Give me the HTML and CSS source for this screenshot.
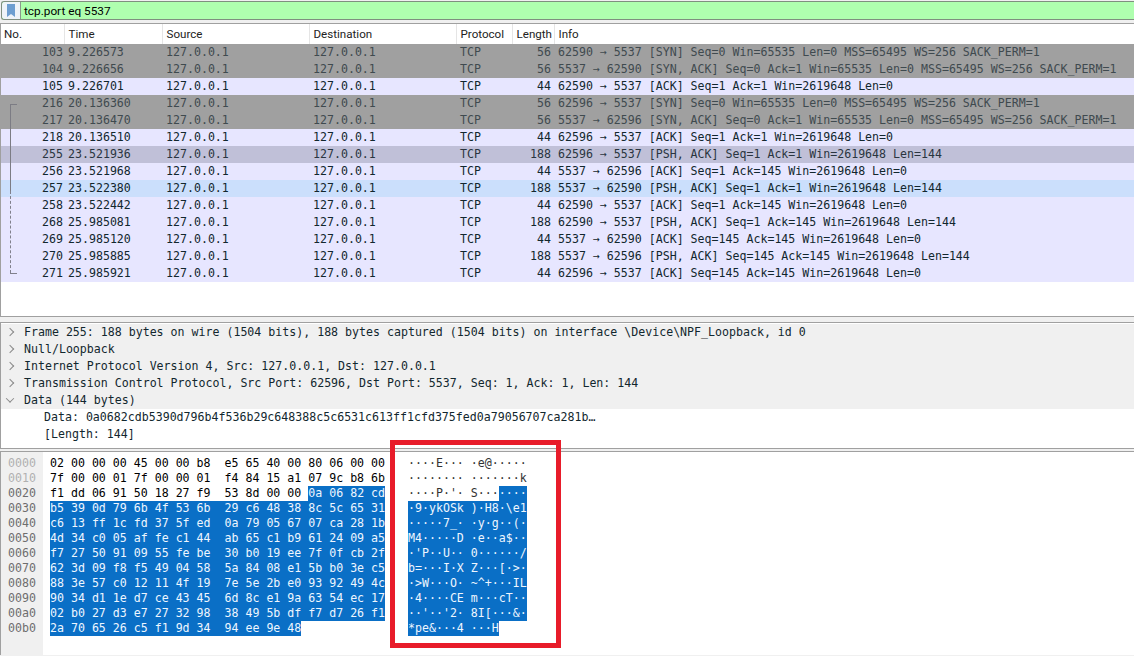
FILE: index.html
```html
<!DOCTYPE html>
<html>
<head>
    <meta charset="UTF-8">
    <title>tcp.port eq 5537</title>
    <link rel="stylesheet" href="styles.css">
</head>
<body>
    <div class="filter-wrap">
        <div class="filter-bar">
            <span class="bookmark-box">
                <svg width="10" height="14" viewBox="0 0 10 14"><path d="M1 0H9V13L5 10L1 13Z" fill="#6d9ed0"/></svg>
            </span>
            <span class="filter-text">tcp.port eq 5537</span>
        </div>
    </div>

    <div class="packet-panel">
        <table class="packets">
            <tr class="head">
                <th class="c-no">No.</th>
                <th class="c-time">Time</th>
                <th class="c-src">Source</th>
                <th class="c-dst">Destination</th>
                <th class="c-proto">Protocol</th>
                <th class="c-len">Length</th>
                <th class="c-info">Info</th>
            </tr>
            <tr class="syn"><td class="num">103</td><td>9.226573</td><td>127.0.0.1</td><td>127.0.0.1</td><td>TCP</td><td class="num">56</td><td>62590 → 5537 [SYN] Seq=0 Win=65535 Len=0 MSS=65495 WS=256 SACK_PERM=1</td></tr>
            <tr class="syn"><td class="num">104</td><td>9.226656</td><td>127.0.0.1</td><td>127.0.0.1</td><td>TCP</td><td class="num">56</td><td>5537 → 62590 [SYN, ACK] Seq=0 Ack=1 Win=65535 Len=0 MSS=65495 WS=256 SACK_PERM=1</td></tr>
            <tr class="tcp"><td class="num">105</td><td>9.226701</td><td>127.0.0.1</td><td>127.0.0.1</td><td>TCP</td><td class="num">44</td><td>62590 → 5537 [ACK] Seq=1 Ack=1 Win=2619648 Len=0</td></tr>
            <tr class="syn"><td class="num">216</td><td>20.136360</td><td>127.0.0.1</td><td>127.0.0.1</td><td>TCP</td><td class="num">56</td><td>62596 → 5537 [SYN] Seq=0 Win=65535 Len=0 MSS=65495 WS=256 SACK_PERM=1</td></tr>
            <tr class="syn"><td class="num">217</td><td>20.136470</td><td>127.0.0.1</td><td>127.0.0.1</td><td>TCP</td><td class="num">56</td><td>5537 → 62596 [SYN, ACK] Seq=0 Ack=1 Win=65535 Len=0 MSS=65495 WS=256 SACK_PERM=1</td></tr>
            <tr class="tcp"><td class="num">218</td><td>20.136510</td><td>127.0.0.1</td><td>127.0.0.1</td><td>TCP</td><td class="num">44</td><td>62596 → 5537 [ACK] Seq=1 Ack=1 Win=2619648 Len=0</td></tr>
            <tr class="current"><td class="num">255</td><td>23.521936</td><td>127.0.0.1</td><td>127.0.0.1</td><td>TCP</td><td class="num">188</td><td>62596 → 5537 [PSH, ACK] Seq=1 Ack=1 Win=2619648 Len=144</td></tr>
            <tr class="tcp"><td class="num">256</td><td>23.521968</td><td>127.0.0.1</td><td>127.0.0.1</td><td>TCP</td><td class="num">44</td><td>5537 → 62596 [ACK] Seq=1 Ack=145 Win=2619648 Len=0</td></tr>
            <tr class="related"><td class="num">257</td><td>23.522380</td><td>127.0.0.1</td><td>127.0.0.1</td><td>TCP</td><td class="num">188</td><td>5537 → 62590 [PSH, ACK] Seq=1 Ack=1 Win=2619648 Len=144</td></tr>
            <tr class="tcp"><td class="num">258</td><td>23.522442</td><td>127.0.0.1</td><td>127.0.0.1</td><td>TCP</td><td class="num">44</td><td>62590 → 5537 [ACK] Seq=1 Ack=145 Win=2619648 Len=0</td></tr>
            <tr class="tcp"><td class="num">268</td><td>25.985081</td><td>127.0.0.1</td><td>127.0.0.1</td><td>TCP</td><td class="num">188</td><td>62590 → 5537 [PSH, ACK] Seq=1 Ack=145 Win=2619648 Len=144</td></tr>
            <tr class="tcp"><td class="num">269</td><td>25.985120</td><td>127.0.0.1</td><td>127.0.0.1</td><td>TCP</td><td class="num">44</td><td>5537 → 62590 [ACK] Seq=145 Ack=145 Win=2619648 Len=0</td></tr>
            <tr class="tcp"><td class="num">270</td><td>25.985885</td><td>127.0.0.1</td><td>127.0.0.1</td><td>TCP</td><td class="num">188</td><td>5537 → 62596 [PSH, ACK] Seq=145 Ack=145 Win=2619648 Len=144</td></tr>
            <tr class="tcp"><td class="num">271</td><td>25.985921</td><td>127.0.0.1</td><td>127.0.0.1</td><td>TCP</td><td class="num">44</td><td>62596 → 5537 [ACK] Seq=145 Ack=145 Win=2619648 Len=0</td></tr>
        </table>
        <div class="conv-solid"></div>
        <div class="conv-dashed"></div>
        <div class="conv-end"></div>
    </div>

    <div class="detail-panel">
        <div class="tree-row"><span class="arrow closed"></span><span class="tree-text">Frame 255: 188 bytes on wire (1504 bits), 188 bytes captured (1504 bits) on interface \Device\NPF_Loopback, id 0</span></div>
        <div class="tree-row"><span class="arrow closed"></span><span class="tree-text">Null/Loopback</span></div>
        <div class="tree-row"><span class="arrow closed"></span><span class="tree-text">Internet Protocol Version 4, Src: 127.0.0.1, Dst: 127.0.0.1</span></div>
        <div class="tree-row"><span class="arrow closed"></span><span class="tree-text">Transmission Control Protocol, Src Port: 62596, Dst Port: 5537, Seq: 1, Ack: 1, Len: 144</span></div>
        <div class="tree-row"><span class="arrow open"></span><span class="tree-text">Data (144 bytes)</span></div>
        <div class="tree-row child"><span class="tree-text">Data: 0a0682cdb5390d796b4f536b29c648388c5c6531c613ff1cfd375fed0a79056707ca281b…</span></div>
        <div class="tree-row child"><span class="tree-text">[Length: 144]</span></div>
    </div>

    <div class="hex-panel">
        <div class="offsets">
            <div class="dim">0000</div><div class="dim">0010</div><div>0020</div><div>0030</div><div>0040</div><div>0050</div>
            <div>0060</div><div>0070</div><div>0080</div><div>0090</div><div>00a0</div><div>00b0</div>
        </div>
        <div class="hex-col">
            <div>02 00 00 00 45 00 00 b8  e5 65 40 00 80 06 00 00</div>
            <div>7f 00 00 01 7f 00 00 01  f4 84 15 a1 07 9c b8 6b</div>
            <div>f1 dd 06 91 50 18 27 f9  53 8d 00 00 <span class="sel">0a 06 82 cd</span></div>
            <div><span class="sel">b5 39 0d 79 6b 4f 53 6b  29 c6 48 38 8c 5c 65 31</span></div>
            <div><span class="sel">c6 13 ff 1c fd 37 5f ed  0a 79 05 67 07 ca 28 1b</span></div>
            <div><span class="sel">4d 34 c0 05 af fe c1 44  ab 65 c1 b9 61 24 09 a5</span></div>
            <div><span class="sel">f7 27 50 91 09 55 fe be  30 b0 19 ee 7f 0f cb 2f</span></div>
            <div><span class="sel">62 3d 09 f8 f5 49 04 58  5a 84 08 e1 5b b0 3e c5</span></div>
            <div><span class="sel">88 3e 57 c0 12 11 4f 19  7e 5e 2b e0 93 92 49 4c</span></div>
            <div><span class="sel">90 34 d1 1e d7 ce 43 45  6d 8c e1 9a 63 54 ec 17</span></div>
            <div><span class="sel">02 b0 27 d3 e7 27 32 98  38 49 5b df f7 d7 26 f1</span></div>
            <div><span class="sel">2a 70 65 26 c5 f1 9d 34  94 ee 9e 48</span></div>
        </div>
        <div class="ascii-col">
            <div>····E··· ·e@·····</div>
            <div>········ ·······k</div>
            <div>····P·'· S···<span class="sel">····</span></div>
            <div><span class="sel">·9·ykOSk )·H8·\e1</span></div>
            <div class="on-top"><span class="sel">·····7_· ·y·g··(·</span></div>
            <div><span class="sel">M4·····D ·e··a$··</span></div>
            <div><span class="sel">·'P··U·· 0······/</span></div>
            <div><span class="sel">b=···I·X Z···[·&gt;·</span></div>
            <div><span class="sel">·&gt;W···O· ~^+···IL</span></div>
            <div><span class="sel">·4····CE m···cT··</span></div>
            <div><span class="sel">··'··'2· 8I[···&amp;·</span></div>
            <div><span class="sel">*pe&amp;···4 ···H</span></div>
        </div>
    </div>

    <div class="red-box"></div>
</body>
</html>
```

FILE: styles.css
```css
html, body {
    margin: 0;
    height: 656px;
    overflow: hidden;
}
body {
    position: relative;
    background: #f0f0f0;
    font-family: "DejaVu Sans Mono", monospace;
    font-size: 11.6px;
    color: #12272e;
}

/* filter bar */
.filter-wrap {
    height: 23px;
    padding: 1px 0 0 1px;
    box-sizing: border-box;
}
.filter-bar {
    display: flex;
    align-items: center;
    height: 19px;
    box-sizing: border-box;
    background: #afffaf;
    border: 1px solid #7f8f7f;
    border-right: none;
    border-radius: 3px 0 0 3px;
}
.bookmark-box {
    display: flex;
    justify-content: center;
    align-items: center;
    width: 18px;
    height: 17px;
    background: #eef3f8;
    border-right: 1px solid #8a9a8a;
    border-radius: 3px 0 0 3px;
}
.filter-text {
    margin-left: 3px;
    font-family: Roboto, sans-serif;
    font-size: 11.8px;
    color: #000;
}

/* packet list */
.packet-panel {
    position: relative;
    height: 294px;
    box-sizing: border-box;
    background: #fff;
    border: 1px solid #a0a0a0;
    border-right: none;
    overflow: hidden;
}
.packets {
    width: 1133px;
    border-collapse: collapse;
    table-layout: fixed;
}
.packets th {
    box-sizing: border-box;
    height: 20px;
    padding: 0 0 1px 4px;
    font-family: Roboto, sans-serif;
    font-size: 11.6px;
    font-weight: normal;
    text-align: left;
    color: #222;
    background: #fff;
    border-right: 1px solid #e5e5e5;
}
.packets th.c-no {
    padding-left: 3px;
}
.packets th.c-info {
    border-right: none;
}
.c-no { width: 63px; }
.c-time { width: 98px; }
.c-src { width: 147px; }
.c-dst { width: 147px; }
.c-proto { width: 56px; }
.c-len { width: 42px; }
.packets td {
    box-sizing: border-box;
    height: 17px;
    padding: 0 0 0 4px;
    line-height: 16px;
    vertical-align: top;
    white-space: nowrap;
    overflow: visible;
}
.packets td.num {
    padding: 0 3px 0 0;
    text-align: right;
}
.packets td.num:first-child {
    padding-right: 1px;
}
.syn td { background: #a0a0a0; color: #3f4a4f; }
.tcp td { background: #e7e6ff; }
.current td { background: #c0c0d8; color: #2a3540; }
.related td { background: #cbdffc; }

/* conversation marker in the No. column */
.conv-solid {
    position: absolute;
    left: 9px;
    top: 80px;
    width: 6px;
    height: 86px;
    border-left: 1px solid #7c7c84;
    border-top: 1px solid #7c7c84;
}
.conv-dashed {
    position: absolute;
    left: 9px;
    top: 167px;
    height: 82px;
    border-left: 1px dashed #80808c;
}
.conv-end {
    position: absolute;
    left: 9px;
    top: 249px;
    width: 7px;
    height: 1px;
    background: #80808c;
}

/* packet details */
.detail-panel {
    height: 127px;
    margin-top: 5px;
    box-sizing: border-box;
    padding-top: 1px;
    background: #fff;
    border: 1px solid #a0a0a0;
    border-right: none;
}
.tree-row {
    display: flex;
    align-items: center;
    height: 17px;
    box-sizing: border-box;
    padding: 0 0 1px 6px;
    background: #f0f0f0;
    white-space: nowrap;
}
.tree-row.child {
    padding-left: 43px;
    background: #fff;
}
.tree-text {
    margin-left: 11px;
}
.child .tree-text {
    margin-left: 0;
}
.arrow {
    width: 6px;
    height: 6px;
    box-sizing: border-box;
    border-right: 1px solid #8a8a8a;
    border-bottom: 1px solid #8a8a8a;
}
.arrow.closed { transform: rotate(-45deg); }
.arrow.open { transform: rotate(45deg) translate(-1px, -1px); }

/* hex dump */
.hex-panel {
    display: flex;
    height: 204px;
    margin-top: 2px;
    box-sizing: border-box;
    background: #fff;
    border: 1px solid #a0a0a0;
    border-bottom: none;
    border-right: none;
    line-height: 15px;
}
.hex-panel div div {
    height: 15px;
    white-space: pre;
}
.offsets {
    width: 42px;
    box-sizing: border-box;
    padding: 4px 0 0 7px;
    color: #6e6e6e;
    background: #f0f0f0;
}
.offsets .dim {
    color: #b0b0b0;
}
.hex-col {
    width: 358px;
    box-sizing: border-box;
    padding: 4px 0 0 7px;
    color: #000;
}
.ascii-col {
    padding: 4px 0 0 7px;
    color: #333;
}
.sel {
    display: inline-block;
    height: 15px;
    vertical-align: top;
    background: #0a6fc6;
    color: #eef6ff;
}
/* keeps the underscore visible over the selected row below */
.hex-panel .on-top {
    position: relative;
    z-index: 1;
}

/* red annotation drawn over the capture */
.red-box {
    position: absolute;
    z-index: 2;
    left: 390px;
    top: 440px;
    width: 171px;
    height: 208px;
    box-sizing: border-box;
    border: 5px solid #e81c2a;
}
```
